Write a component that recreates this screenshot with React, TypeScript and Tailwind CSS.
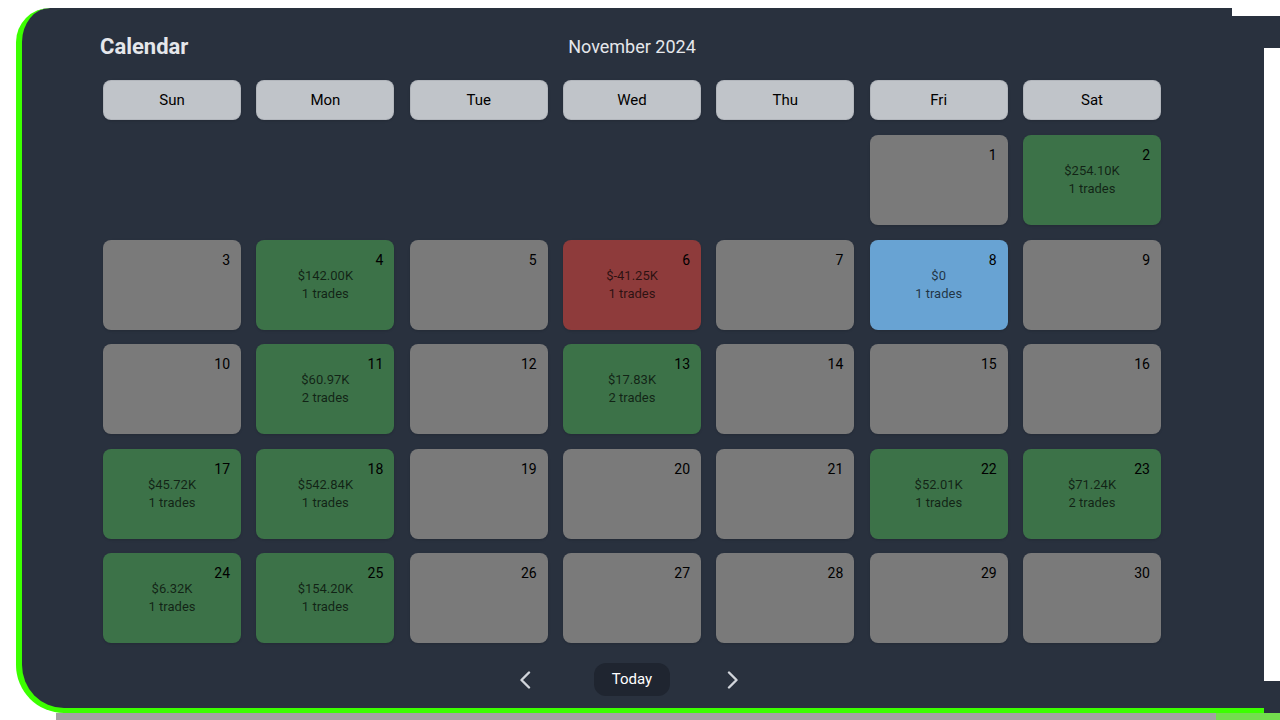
import React from "react";

type Day = {
  day: number;
  pnl?: string;
  trades?: number;
  tone?: "win" | "loss" | "flat";
};

const weekDays = ["Sun", "Mon", "Tue", "Wed", "Thu", "Fri", "Sat"];

const results: Record<number, { pnl: string; trades: number; tone: "win" | "loss" | "flat" }> = {
  2: { pnl: "$254.10K", trades: 1, tone: "win" },
  4: { pnl: "$142.00K", trades: 1, tone: "win" },
  6: { pnl: "$-41.25K", trades: 1, tone: "loss" },
  8: { pnl: "$0", trades: 1, tone: "flat" },
  11: { pnl: "$60.97K", trades: 2, tone: "win" },
  13: { pnl: "$17.83K", trades: 2, tone: "win" },
  17: { pnl: "$45.72K", trades: 1, tone: "win" },
  18: { pnl: "$542.84K", trades: 1, tone: "win" },
  22: { pnl: "$52.01K", trades: 1, tone: "win" },
  23: { pnl: "$71.24K", trades: 2, tone: "win" },
  24: { pnl: "$6.32K", trades: 1, tone: "win" },
  25: { pnl: "$154.20K", trades: 1, tone: "win" },
};

// November 2024 starts on a Friday
const firstWeekday = 5;
const daysInMonth = 30;

const toneClass = {
  win: "bg-[#3c7248]",
  loss: "bg-[#8e3b3b]",
  flat: "bg-[#68a3d3]",
};

function DayCell({ day, pnl, trades, tone }: Day) {
  return (
    <div
      className={`h-[90px] rounded-[8px] pt-[10px] px-[11px] shadow-sm ${
        tone ? toneClass[tone] : "bg-[#7a7a7a]"
      }`}
    >
      <div className="h-[20px] text-right text-[14px] leading-[20px] text-black">
        {day}
      </div>
      {pnl && (
        <div className="-mt-[3px] text-center text-[13px] leading-[18px] text-black/70">
          <p>{pnl}</p>
          <p>{trades} trades</p>
        </div>
      )}
    </div>
  );
}

function Chevron({ dir }: { dir: "left" | "right" }) {
  return (
    <svg width="12" height="18" viewBox="0 0 12 18" fill="none">
      <polyline
        points={dir === "left" ? "10,1.5 2.5,9 10,16.5" : "2,1.5 9.5,9 2,16.5"}
        stroke="#d1d5db"
        strokeWidth="2.4"
        strokeLinecap="round"
        strokeLinejoin="round"
      />
    </svg>
  );
}

export default function App() {
  const slots: (Day | null)[] = [];
  for (let i = 0; i < firstWeekday; i++) slots.push(null);
  for (let d = 1; d <= daysInMonth; d++) slots.push({ day: d, ...results[d] });

  return (
    <div className="relative w-[1280px] h-[720px] overflow-hidden bg-white font-['Roboto',sans-serif]">
      {/* capture artifacts around the panel */}
      <div className="absolute left-[1264px] top-[16px] w-[16px] h-[32px] bg-[#29313e]" />
      <div className="absolute left-[1264px] top-[681px] w-[16px] h-[32px] bg-[#29313e]" />
      <div className="absolute left-[1232px] top-[8px] w-[32px] h-[8px] bg-white" />

      <div className="ml-[16px] mt-[8px] w-[1248px] h-[705px] bg-[#29313e] border-l-[6px] border-b-[5px] border-[#3cff00] rounded-tl-[34px] rounded-bl-[48px]">
        <div className="ml-[81px] w-[1058px] pt-[22px]">
          {/* Title row */}
          <div className="grid grid-cols-3 items-center h-[30px]">
            <h1 className="-ml-[3px] text-[22px] font-bold text-[#e5e7eb]">Calendar</h1>
            <p className="text-center text-[18px] text-[#e5e7eb]">November 2024</p>
            <div />
          </div>

          {/* Weekday header */}
          <div className="mt-[20px] grid grid-cols-7 gap-x-[15.3px]">
            {weekDays.map((d) => (
              <div
                key={d}
                className="h-[40px] flex items-center justify-center rounded-[8px] bg-[#c0c4c9] border border-[#9ea3aa]/40 shadow-sm text-[15px] text-black"
              >
                {d}
              </div>
            ))}
          </div>

          {/* Days */}
          <div className="mt-[15px] grid grid-cols-7 gap-x-[15.3px] gap-y-[14.5px]">
            {slots.map((s, i) => (s ? <DayCell key={i} {...s} /> : <div key={i} className="h-[90px]" />))}
          </div>

          {/* Navigation */}
          <div className="mt-[20px] flex items-center">
            <button className="ml-[402px] w-[40px] h-[33px] flex items-center justify-center">
              <Chevron dir="left" />
            </button>
            <button className="ml-[49px] w-[76px] h-[33px] rounded-[12px] bg-[#1f2530] text-[15px] text-white">
              Today
            </button>
            <button className="ml-[43px] w-[40px] h-[33px] flex items-center justify-center">
              <Chevron dir="right" />
            </button>
          </div>
        </div>
      </div>

      <div className="flex ml-[56px] h-[7px]">
        <div className="w-[1160px] bg-[#a3a3a3]" />
        <div className="flex-1 bg-[#74dd4e]" />
      </div>
    </div>
  );
}
